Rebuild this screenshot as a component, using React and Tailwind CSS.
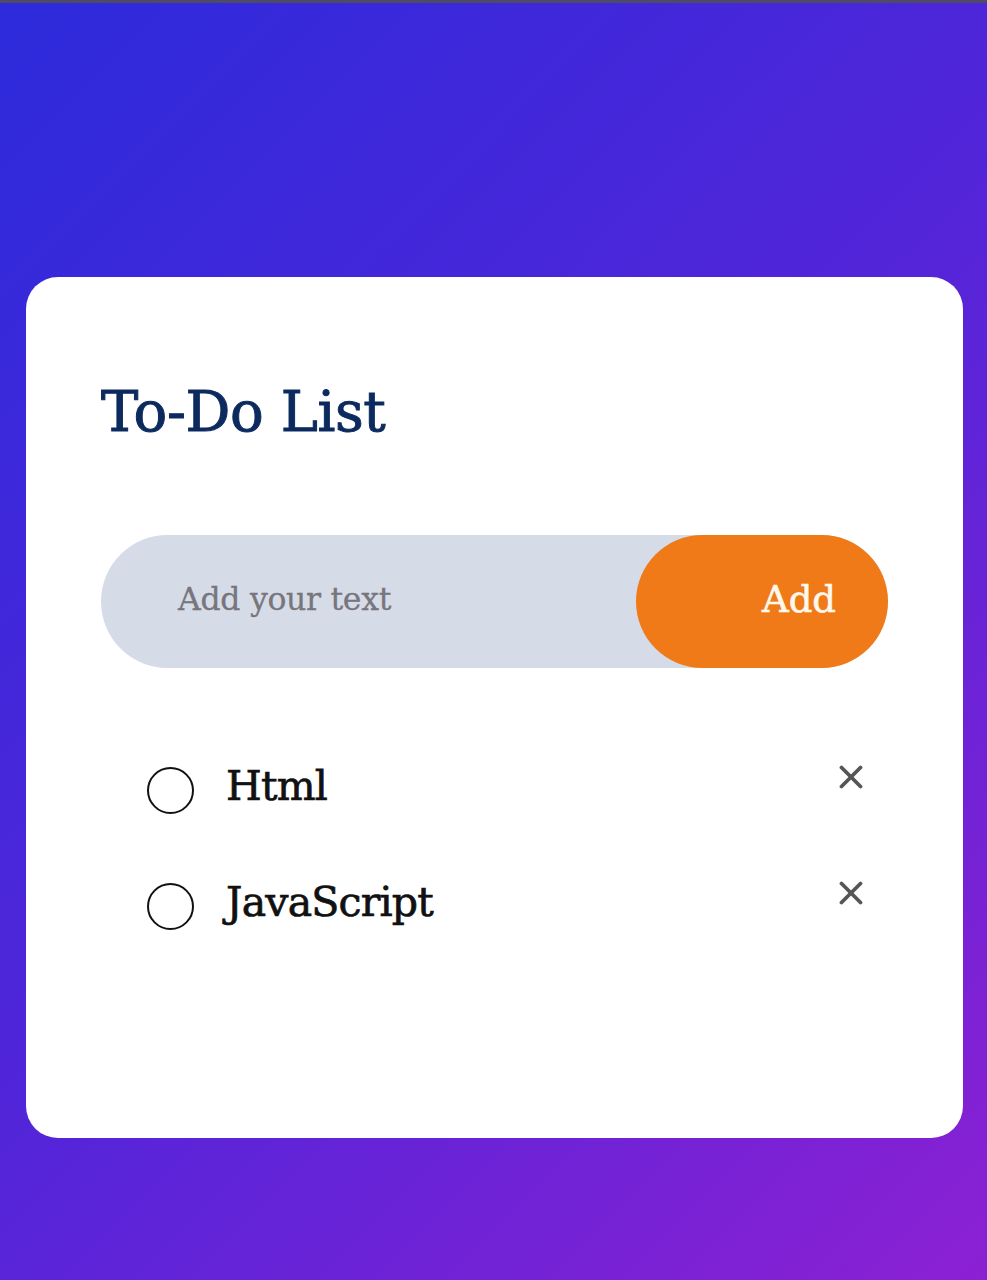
import React from "react";

const serif = { fontFamily: '"DejaVu Serif", "Liberation Serif", serif' };

function Item({ label }) {
  return (
    <li className="flex h-[116px] items-center">
      <span className="ml-[46px] h-[47px] w-[47px] shrink-0 rounded-full border-2 border-[#111]" />
      <span className="mb-[8px] ml-[32px] flex-1 text-[41px] leading-none tracking-[-0.8px] text-[#111] [-webkit-text-stroke:0.7px_#111]">
        {label}
      </span>
      <svg
        className="mb-[26px] mr-[25px] h-[24px] w-[24px]"
        viewBox="0 0 24 24"
        fill="none"
        stroke="#555"
        strokeWidth="3.8"
        strokeLinecap="round"
      >
        <line x1="2.5" y1="2.5" x2="21.5" y2="21.5" />
        <line x1="21.5" y1="2.5" x2="2.5" y2="21.5" />
      </svg>
    </li>
  );
}

export default function App() {
  return (
    <div
      className="flex min-h-[1280px] w-full flex-col bg-[linear-gradient(135deg,#2c2bdb_0%,#5225d9_50%,#8c20d3_100%)]"
      style={serif}
    >
      <div className="h-[3px] w-full bg-[#4f4a66]" />
      <div className="pl-[26px] pr-[24px] pt-[274px]">
        <div className="h-[861px] rounded-[32px] bg-white px-[75px] pt-[103px]">
          <h1 className="text-[56px] font-normal leading-[64px] tracking-[-0.4px] text-[#0c2a5e] [-webkit-text-stroke:1px_#0c2a5e]">
            To-Do List
          </h1>
          <div className="mt-[91px] flex h-[133px] items-center rounded-full bg-[#d6dbe8]">
            <span className="mb-[4px] ml-[77px] flex-1 text-[31.5px] leading-none tracking-[-0.3px] text-[#76767c] [-webkit-text-stroke:0.3px_#76767c]">
              Add your text
            </span>
            <button className="flex h-full w-[252px] items-center justify-end rounded-full bg-[#ef7a17] pb-[4px] pr-[52px] text-[37px] leading-none text-[#fff8ec] [-webkit-text-stroke:0.6px_#fff8ec]">
              Add
            </button>
          </div>
          <ul className="mt-[64px]">
            <Item label="Html" />
            <Item label="JavaScript" />
          </ul>
        </div>
      </div>
    </div>
  );
}
